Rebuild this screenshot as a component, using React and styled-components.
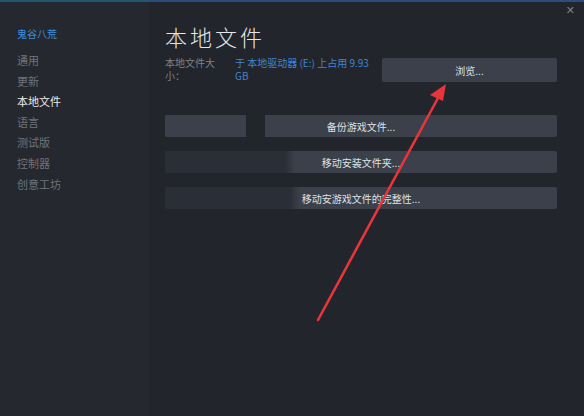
import React from 'react'
import styled, { createGlobalStyle } from 'styled-components'

const Global = createGlobalStyle`
  html, body { margin: 0; padding: 0; background: #22252c; }
  body { font-family: "Noto Sans CJK SC", "Noto Sans", sans-serif; }
`

const NAV = ['通用', '更新', '本地文件', '语言', '测试版', '控制器', '创意工坊']

const ACTIONS = [
  { label: '备份游戏文件...', cut: [81, 100] },
  { label: '移动安装文件夹...', cut: [0, 0], blur: 120 },
  { label: '移动安游戏文件的完整性...', cut: [0, 0], blur: 125 },
]

export default function App() {
  return (
    <Window>
      <Global />
      <TopLine />
      <Body>
        <Sidebar>
          <GameName>鬼谷八荒</GameName>
          <Nav>
            {NAV.map((n) => (
              <NavItem key={n} active={n === '本地文件'}>{n}</NavItem>
            ))}
          </Nav>
        </Sidebar>
        <Main>
          <Close>✕</Close>
          <Title>本地文件</Title>
          <InfoRow>
            <Label>本地文件大小：</Label>
            <Size>于 本地驱动器 (E:) 上占用 9.93 GB</Size>
            <Browse>浏览...</Browse>
          </InfoRow>
          <Actions>
            {ACTIONS.map((a) => (
              <ActionButton key={a.label} cutFrom={a.cut[0]} cutTo={a.cut[1]} blur={a.blur}>
                {a.label}
              </ActionButton>
            ))}
          </Actions>
          <Arrow viewBox="0 0 584 416">
            <line x1="318" y1="320" x2="438" y2="98" stroke="#e8353b" strokeWidth="2.6" strokeLinecap="round" />
            <polygon points="446,84 430,95 443,101" fill="#e8353b" />
          </Arrow>
        </Main>
      </Body>
    </Window>
  )
}

const Window = styled.div`
  width: 584px;
  height: 416px;
  display: flex;
  flex-direction: column;
  overflow: hidden;
  position: relative;
`

const TopLine = styled.div`
  height: 2px;
  flex: none;
  background: linear-gradient(90deg, #23566f 0 149px, #2c4d7e 149px);
`

const Body = styled.div`
  flex: 1;
  display: flex;
`

const Sidebar = styled.div`
  width: 149px;
  flex: none;
  background: #25282e;
  padding: 25px 0 0 17px;
  box-sizing: border-box;
`

const GameName = styled.div`
  color: #3d8fe0;
  font-size: 10px;
  line-height: 14px;
  margin-bottom: 9px;
`

const Nav = styled.div`
  display: flex;
  flex-direction: column;
`

const NavItem = styled.div`
  font-size: 11px;
  line-height: 20.6px;
  color: ${({ active }) => (active ? '#e8eaed' : '#6f747c')};
`

const Main = styled.div`
  flex: 1;
  background: #22252c;
  padding: 20px 27px 0 16px;
  position: relative;
`

const Close = styled.div`
  position: absolute;
  top: 2px;
  right: 9px;
  color: #7b8088;
  font-size: 11px;
  font-family: "DejaVu Sans", sans-serif;
`

const Title = styled.div`
  color: #e4e6e9;
  font-size: 22px;
  line-height: 28px;
  letter-spacing: 3px;
  font-weight: 300;
`

const InfoRow = styled.div`
  display: flex;
  align-items: flex-start;
  margin-top: 6px;
`

const Label = styled.div`
  width: 56px;
  color: #7d828a;
  font-size: 10px;
  line-height: 13px;
  margin-right: 14px;
`

const Size = styled.div`
  width: 140px;
  color: #3f84d6;
  font-size: 10px;
  line-height: 13px;
  margin-right: 7px;
`

const Browse = styled.div`
  flex: 1;
  height: 24px;
  margin-top: 2px;
  background: #3b404b;
  border-radius: 2px;
  color: #dfe2e6;
  font-size: 10px;
  display: flex;
  align-items: center;
  justify-content: center;
`

const Actions = styled.div`
  display: flex;
  flex-direction: column;
  gap: 14px;
  margin-top: 33px;
`

const ActionButton = styled.div`
  height: 22px;
  border-radius: 2px;
  color: #dfe2e6;
  font-size: 10px;
  display: flex;
  align-items: center;
  justify-content: center;
  background: ${({ cutFrom, cutTo, blur }) =>
    cutTo > cutFrom
      ? `linear-gradient(90deg, #3b404b 0 ${cutFrom}px, #22252c ${cutFrom}px ${cutTo}px, #3b404b ${cutTo}px)`
      : `linear-gradient(90deg, #2a2e36 0 ${blur}px, #3b404b ${blur + 10}px)`};
`

const Arrow = styled.svg`
  position: absolute;
  left: -149px;
  top: -2px;
  width: 584px;
  height: 416px;
  pointer-events: none;
`
